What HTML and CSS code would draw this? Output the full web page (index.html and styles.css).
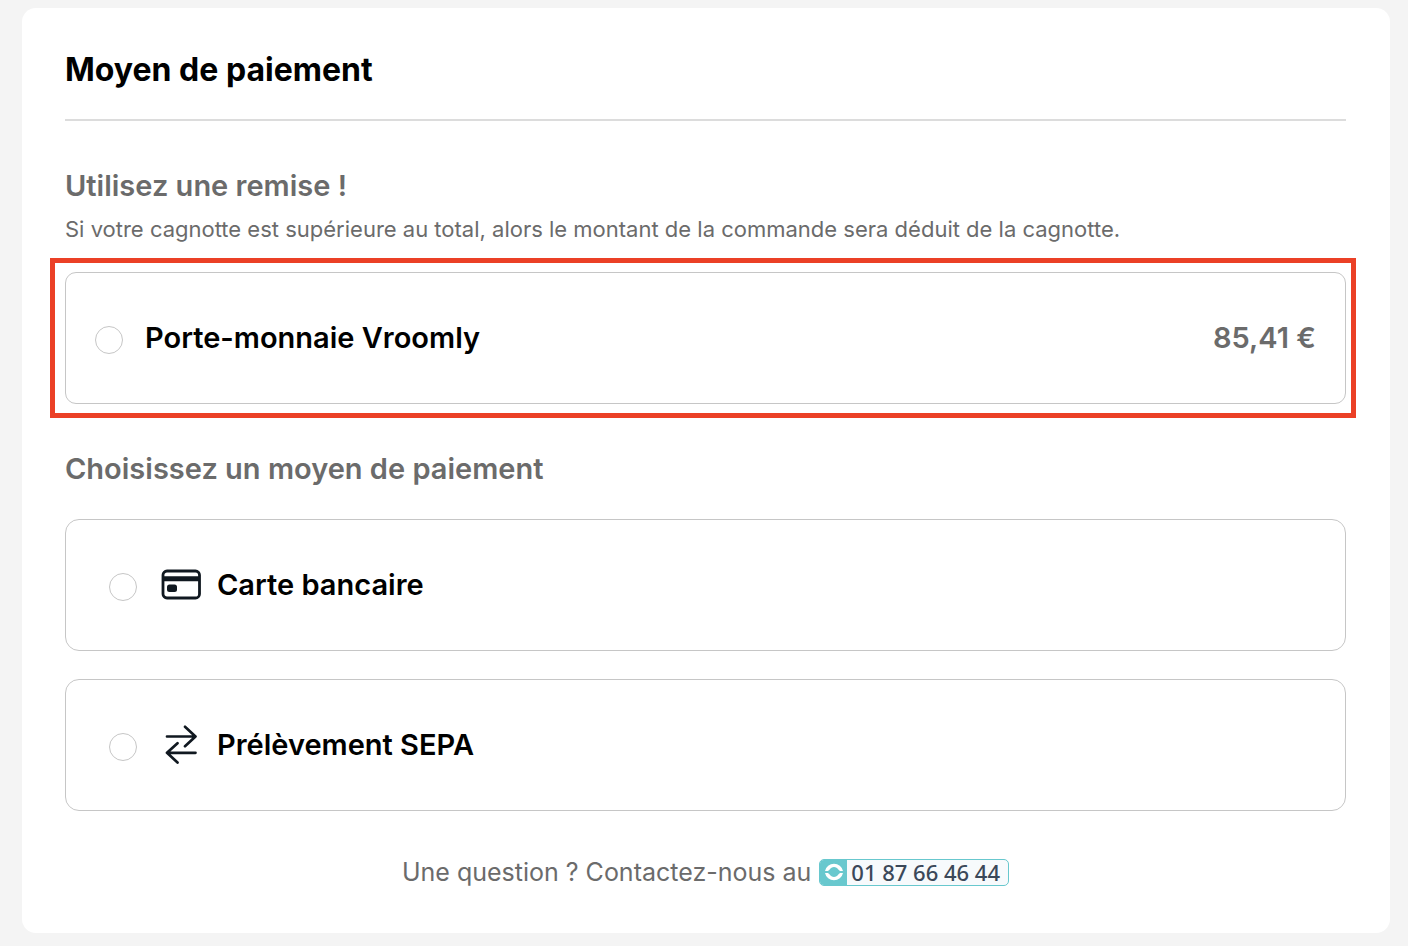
FILE: index.html
```html
<!DOCTYPE html>
<html lang="fr">
  <head>
    <meta charset="UTF-8" />
    <meta name="viewport" content="width=device-width, initial-scale=1.0" />
    <title>Moyen de paiement</title>
    <link rel="stylesheet" href="styles.css">
  </head>
  <body>

    <main class="card">
      <h1>Moyen de paiement</h1>

      <form>
        <section class="discount">
          <h2>Utilisez une remise !</h2>
          <p class="hint">Si votre cagnotte est supérieure au total, alors le montant de la commande sera déduit de la cagnotte.</p>

          <div class="highlight">
            <label class="option wallet" for="wallet">
              <input type="radio" id="wallet" name="discount" />
              <span class="name">Porte-monnaie Vroomly</span>
              <span class="amount">85,41 €</span>
            </label>
          </div>
        </section>

        <section class="methods">
          <h2>Choisissez un moyen de paiement</h2>

          <div class="options">
            <label class="option method" for="card">
              <input type="radio" id="card" name="method" />
              <svg class="icon" viewBox="0 0 40 40" aria-hidden="true">
                <rect x="2" y="6" width="36.500" height="27" rx="4" fill="none" stroke="#101820" stroke-width="2.800" />
                <path d="M2 13.700h36.500" stroke="#101820" stroke-width="5" />
                <rect x="6" y="19.500" width="10" height="7.500" rx="2.500" fill="#101820" />
              </svg>
              <span class="name">Carte bancaire</span>
            </label>

            <label class="option method" for="sepa">
              <input type="radio" id="sepa" name="method" />
              <svg class="icon" viewBox="0 0 40 40" aria-hidden="true">
                <g fill="none" stroke="#101820" stroke-width="2.700" stroke-linecap="round" stroke-linejoin="round">
                  <path d="M6 11.500h28.500M24 1.800l10.500 9.700l-10.500 9.700" />
                  <path d="M34.500 27.800H6M16.500 18.200l-10.500 9.600l10.500 9.700" />
                </g>
              </svg>
              <span class="name">Prélèvement SEPA</span>
            </label>
          </div>
        </section>
      </form>

      <p class="contact">
        Une question ? Contactez-nous au
        <a class="phone" href="tel:+33187664644">
          <span class="phone-logo">
            <svg viewBox="0 0 20 20" aria-hidden="true">
              <g fill="#fff">
                <path d="M1 9A9.200 9.200 0 0 1 19 9H16L14.300 7.500A5 5 0 0 0 5.700 7.500L4 9Z" />
                <path d="M1 11A9.200 9.200 0 0 0 19 11H16L14.300 12.500A5 5 0 0 1 5.700 12.500L4 11Z" />
              </g>
            </svg>
          </span>
          <span class="phone-number">01 87 66 46 44</span>
        </a>
      </p>
    </main>

  </body>
</html>
```
FILE: styles.css
```css
* {
  margin: 0;
  padding: 0;
  box-sizing: border-box;
}

body {
  background-color: #f4f4f4;
  color: #000;
  font-family: Inter, "Liberation Sans", sans-serif;
  padding: 8px 18px 13px 22px;
}

.card {
  background-color: white;
  border-radius: 14px;
  padding: 42px 44px 44px 43px;
}

h1 {
  font-size: 32px;
  font-weight: 700;
  line-height: 40px;
  padding-bottom: 29px;
  border-bottom: 2px solid #dcdcdc;
}

h2 {
  color: #6b6b6b;
  font-size: 29px;
  font-weight: 600;
  line-height: 36px;
}

.discount {
  margin-top: 47px;
}

.hint {
  color: #6b6b6b;
  font-size: 22px;
  line-height: 28px;
  margin: 11px 0 15px;
}

/* red frame sticks out of the column on both sides */
.highlight {
  border: 5px solid #eb4026;
  padding: 9px 5px 9px 10px;
  margin: 0 -10px 0 -15px;
}

.option {
  display: flex;
  align-items: center;
  height: 132px;
  border: 1px solid #c6c6c6;
  border-radius: 14px;
  cursor: pointer;
}

.wallet {
  border-radius: 11px;
  padding: 0 29px;
}

.method {
  padding: 0 43px;
}

input[type="radio"] {
  appearance: none;
  width: 28px;
  height: 28px;
  border: 1px solid #c6c6c6;
  border-radius: 50%;
  margin-top: 4px;
  cursor: pointer;
}

input[type="radio"]:checked {
  border: 8px solid #101820;
}

.name {
  font-size: 29px;
  font-weight: 600;
  line-height: 36px;
}

.wallet .name {
  margin-left: 22px;
}

.amount {
  color: #6b6b6b;
  font-size: 29px;
  font-weight: 600;
  line-height: 36px;
  margin-left: auto;
}

.icon {
  width: 40px;
  height: 40px;
  margin: 0 16px 0 24px;
}

.methods {
  margin-top: 33px;
}

.options {
  display: grid;
  gap: 28px;
  margin-top: 32px;
}

.contact {
  display: flex;
  justify-content: center;
  align-items: center;
  gap: 8px;
  color: #6b6b6b;
  font-size: 25px;
  line-height: 32px;
  margin-top: 45px;
  padding-bottom: 1px;
}

.phone {
  display: flex;
  border: 1px solid #68c8ce;
  border-radius: 5px;
  background-color: #f7fafc;
  color: #3b4859;
  text-decoration: none;
}

.phone-logo {
  display: flex;
  justify-content: center;
  align-items: center;
  width: 27px;
  border-radius: 4px 0 0 4px;
  background-color: #68c8ce;
}

.phone-logo svg {
  width: 20px;
  height: 20px;
}

.phone-number {
  font-family: "Noto Sans", "Open Sans", sans-serif;
  font-size: 22px;
  font-weight: 500;
  line-height: 25px;
  padding: 0 8px 0 4px;
}
```
